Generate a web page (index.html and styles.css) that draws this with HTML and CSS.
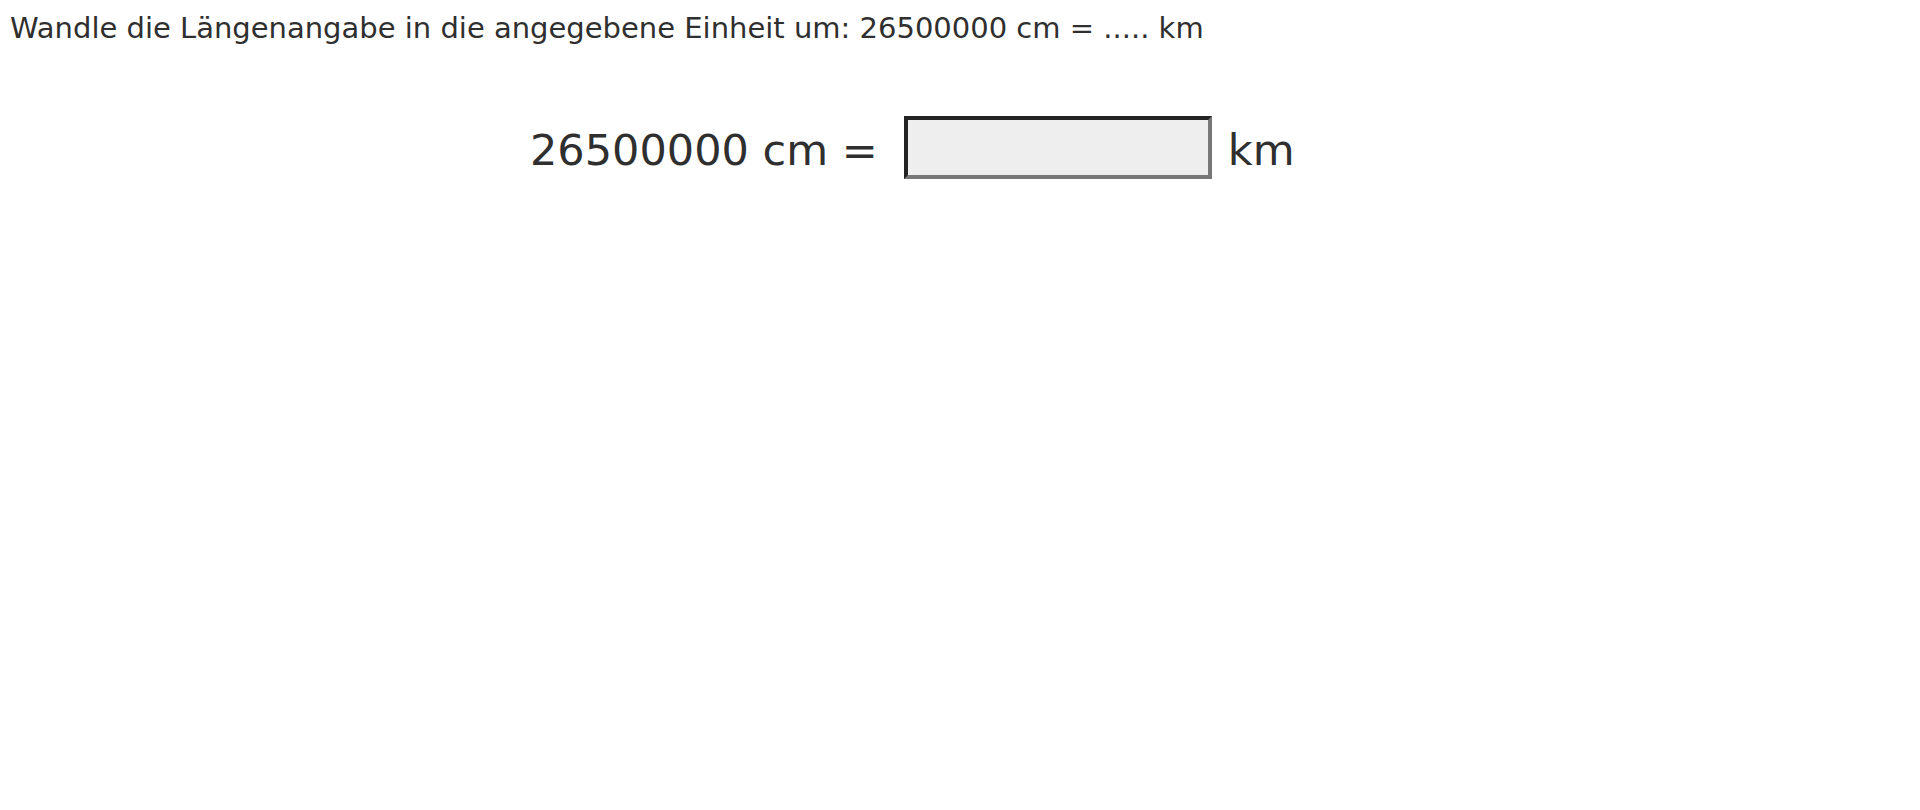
FILE: index.html
```html
<!DOCTYPE html>
<html lang="de">
<head>
<meta charset="utf-8">
<title>Längenangabe</title>
<link rel="stylesheet" href="styles.css">
</head>
<body>
<div class="question">Wandle die Längenangabe in die angegebene Einheit um: 26500000 cm = ..... km</div>
<div class="task">
  <span class="lhs">26500000 cm =</span>
  <input class="answer" type="text" aria-label="Antwort in km">
  <span class="unit">km</span>
</div>
</body>
</html>
```

FILE: styles.css
```css
html, body {
  margin: 0;
  padding: 0;
  background: #ffffff;
}
body {
  font-family: "DejaVu Sans", Verdana, sans-serif;
  color: #2f2f2f;
}
.question {
  font-size: 29px;
  line-height: 34px;
  padding: 11px 0 0 10px;
}
.task {
  display: flex;
  align-items: center;
  padding: 71px 0 0 530px;
  font-size: 43px;
}
.lhs,
.unit {
  position: relative;
  top: 2px;
}
.lhs {
  margin-right: 26px;
}
.answer {
  box-sizing: border-box;
  width: 308px;
  height: 63px;
  border-width: 4px;
  border-style: solid;
  border-color: #222222 #777777 #777777 #222222;
  background: #eeeeee;
  font: inherit;
  margin: 0 16px 0 0;
  padding: 0 6px;
}
```
